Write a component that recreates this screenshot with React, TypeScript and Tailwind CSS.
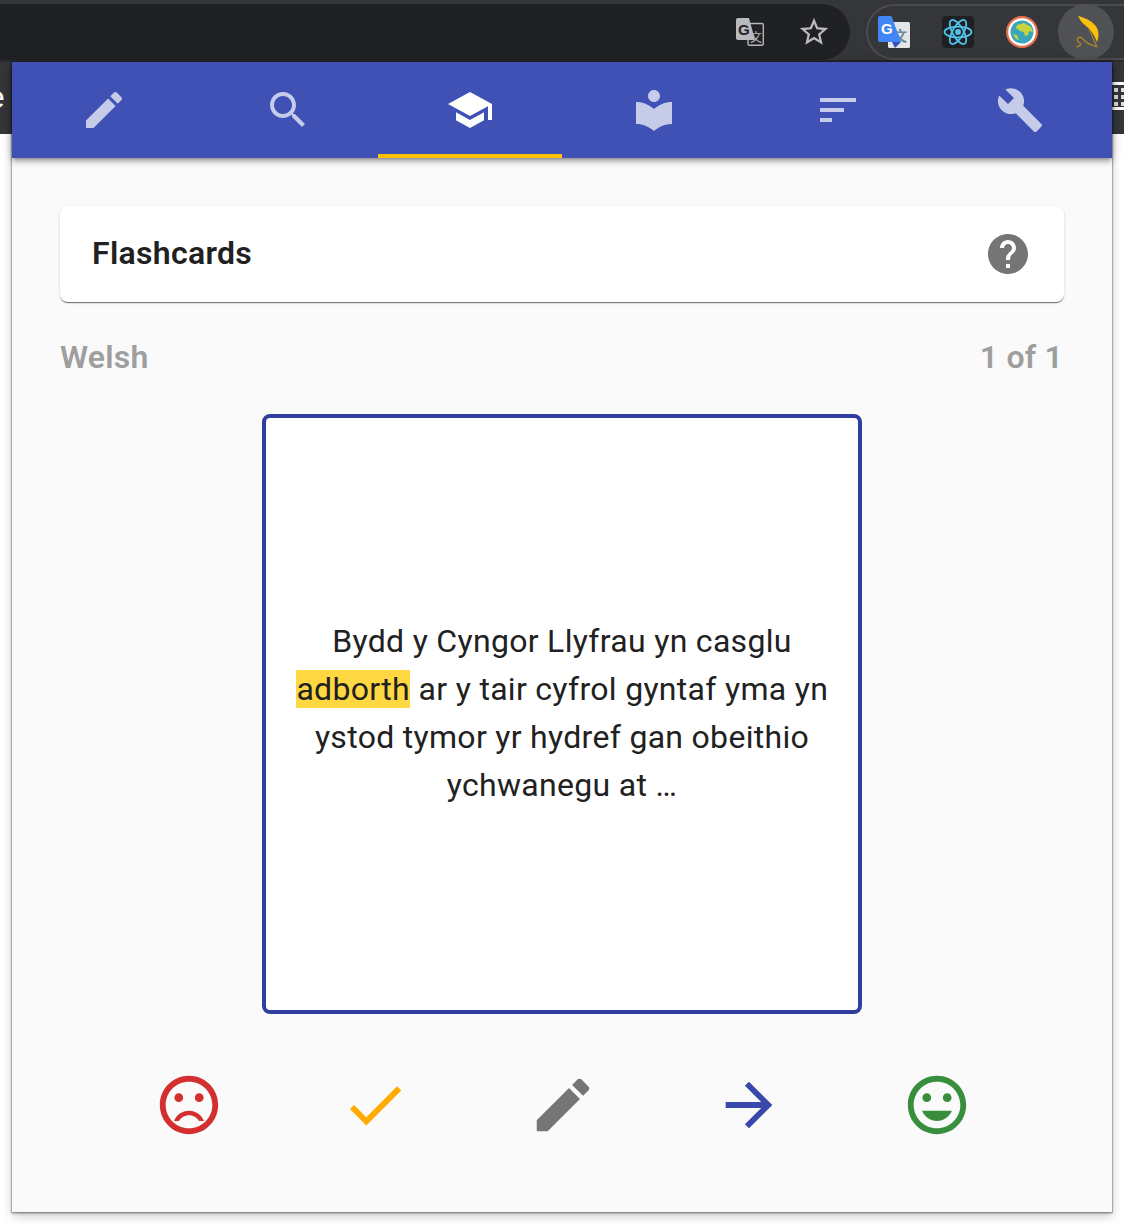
import React from "react";

const P = {
  edit: "M3 17.25V21h3.75L17.81 9.94l-3.75-3.75L3 17.25zM20.71 7.04c.39-.39.39-1.02 0-1.41l-2.34-2.34c-.39-.39-1.02-.39-1.41 0l-1.83 1.83 3.75 3.75 1.83-1.83z",
  search: "M15.5 14h-.79l-.28-.27C15.41 12.59 16 11.11 16 9.5 16 5.91 13.09 3 9.5 3S3 5.91 3 9.5 5.91 16 9.5 16c1.61 0 3.09-.59 4.23-1.57l.27.28v.79l5 4.99L20.49 19l-4.99-5zm-6 0C7.01 14 5 11.99 5 9.5S7.01 5 9.5 5 14 7.01 14 9.5 11.99 14 9.5 14z",
  school: "M5 13.18v4L12 21l7-3.82v-4L12 17l-7-3.82zM12 3L1 9l11 6 9-4.91V17h2V9L12 3z",
  library: "M12 11.55C9.64 9.35 6.48 8 3 8v11c3.48 0 6.64 1.35 9 3.55 2.36-2.19 5.52-3.55 9-3.55V8c-3.48 0-6.64 1.35-9 3.55zM12 8c1.66 0 3-1.34 3-3s-1.34-3-3-3-3 1.34-3 3 1.34 3 3 3z",
  sort: "M3 18h6v-2H3v2zM3 6v2h18V6H3zm0 7h12v-2H3v2z",
  build: "M22.7 19l-9.1-9.1c.9-2.3.4-5-1.5-6.9-2-2-5-2.4-7.4-1.3L9 6 6 9 1.6 4.7C.4 7.1.9 10.1 2.9 12.1c1.9 1.9 4.6 2.4 6.9 1.5l9.1 9.1c.4.4 1 .4 1.4 0l2.3-2.3c.5-.4.5-1.1.1-1.4z",
  help: "M12 2C6.48 2 2 6.48 2 12s4.48 10 10 10 10-4.48 10-10S17.52 2 12 2zm1 17h-2v-2h2v2zm2.07-7.75l-.9.92C13.45 12.9 13 13.5 13 15h-2v-.5c0-1.1.45-2.1 1.17-2.83l1.24-1.26c.37-.36.59-.86.59-1.41 0-1.1-.9-2-2-2s-2 .9-2 2H8c0-2.21 1.79-4 4-4s4 1.79 4 4c0 .88-.36 1.68-.93 2.25z",
  check: "M9 16.17L4.83 12l-1.42 1.41L9 19 21 7l-1.41-1.41z",
  arrow: "M12 4l-1.41 1.41L16.17 11H4v2h12.17l-5.58 5.59L12 20l8-8z",
  sad: "M15.5 8a1.5 1.5 0 1 0 0 3 1.5 1.5 0 0 0 0-3zM8.5 8a1.5 1.5 0 1 0 0 3 1.5 1.5 0 0 0 0-3zM11.99 2C6.47 2 2 6.48 2 12s4.47 10 9.99 10C17.52 22 22 17.52 22 12S17.52 2 11.99 2zM12 20c-4.42 0-8-3.58-8-8s3.58-8 8-8 8 3.58 8 8-3.58 8-8 8zm0-6c-2.33 0-4.32 1.45-5.12 3.5h1.67c.69-1.19 1.97-2 3.45-2s2.75.81 3.45 2h1.67c-.8-2.05-2.79-3.5-5.12-3.5z",
  happy: "M11.99 2C6.47 2 2 6.48 2 12s4.47 10 9.99 10C17.52 22 22 17.52 22 12S17.52 2 11.99 2zM12 20c-4.42 0-8-3.58-8-8s3.58-8 8-8 8 3.58 8 8-3.58 8-8 8zm3.5-9c.83 0 1.5-.67 1.5-1.5S16.33 8 15.5 8 14 8.67 14 9.5s.67 1.5 1.5 1.5zm-7 0c.83 0 1.5-.67 1.5-1.5S9.33 8 8.5 8 7 8.67 7 9.5 7.67 11 8.5 11zm3.5 6.5c2.33 0 4.31-1.46 5.11-3.5H6.89c.8 2.04 2.78 3.5 5.11 3.5z",
};

function Icon({ d, className }: { d: string; className: string }) {
  return (
    <svg viewBox="0 0 24 24" className={className} fill="currentColor" fillRule="evenodd">
      <path d={d} />
    </svg>
  );
}

function Tab({ d, active, nudge }: { d: string; active?: boolean; nudge?: boolean }) {
  return (
    <div className={`relative flex items-center justify-center ${active ? "text-white" : "text-[#c5cbe9]"} ${nudge ? "pl-[2px]" : ""}`}>
      <Icon d={d} className="w-12 h-12" />
      {active && <div className="absolute -left-px right-0 bottom-0 h-1 bg-[#ffc107]" />}
    </div>
  );
}

function TranslateMono() {
  return (
    <svg viewBox="0 0 28 28" className="w-7 h-7">
      <rect x="12" y="5.5" width="15.3" height="21.8" rx="1.5" fill="#202124" stroke="#b5b6b8" strokeWidth="1.4" />
      <path d="M0 2A2 2 0 0 1 2 0h11l6 22H2a2 2 0 0 1-2-2z" fill="#b9babc" />
      <text x="2" y="16.5" fontFamily="Liberation Sans, sans-serif" fontWeight="700" fontSize="15" fill="#202124">G</text>
      <text x="14" y="24" fontFamily="Noto Sans CJK SC, sans-serif" fontSize="12" fill="#b5b6b8">文</text>
    </svg>
  );
}

function GoogleTranslate() {
  return (
    <svg viewBox="0 0 32 32" className="w-8 h-8">
      <rect x="10" y="6" width="22" height="26" rx="1.5" fill="#e4e5e6" />
      <text x="15" y="25" fontFamily="Noto Sans CJK SC, sans-serif" fontSize="14" fontWeight="700" fill="#6b8a96">文</text>
      <path d="M0 2A2 2 0 0 1 2 0h11.5L23 26H2a2 2 0 0 1-2-2z" fill="#4285f4" />
      <path d="M14 26h9l-6 6z" fill="#3a50b4" />
      <text x="3" y="18" fontFamily="Liberation Sans, sans-serif" fontWeight="700" fontSize="15" fill="#fff">G</text>
    </svg>
  );
}

function ReactLogo() {
  return (
    <div className="w-8 h-8 rounded bg-[#1f2023] flex items-center justify-center">
      <svg viewBox="0 0 32 32" className="w-8 h-8" fill="none" stroke="#4fc3e8" strokeWidth="1.8">
        <ellipse cx="16" cy="16" rx="13.5" ry="5.4" />
        <ellipse cx="16" cy="16" rx="13.5" ry="5.4" transform="rotate(60 16 16)" />
        <ellipse cx="16" cy="16" rx="13.5" ry="5.4" transform="rotate(120 16 16)" />
        <circle cx="16" cy="16" r="3" fill="#4fc3e8" stroke="none" />
      </svg>
    </div>
  );
}

function Earth() {
  return (
    <svg viewBox="0 0 32 32" className="w-8 h-8">
      <circle cx="16" cy="16" r="16" fill="#e8704f" />
      <circle cx="16" cy="16" r="13.8" fill="#fff" />
      <circle cx="16" cy="16" r="11.5" fill="#3aa6b9" />
      <path d="M11 9l7-2 7 4 2 5-4-1-1 4-3 1-1-4-4-1-4-3z" fill="#c9d53c" />
      <path d="M7 18l4 1 2 5-3-1z" fill="#c9d53c" />
    </svg>
  );
}

function Feather() {
  return (
    <div className="w-14 h-14 rounded-full bg-[#505154]">
      <svg viewBox="0 0 56 56" className="w-14 h-14" fill="none">
        <path d="M20 12C28 14 36 18 39 24C41 28 41 33 39 38C36 30 32 25 28 22C24 19 22 16 20 12z" fill="#f9c00c" />
        <path d="M39 43C34 41 30 40 27 37C24 34 22 32 20 34C18 36 20 38 22 39C24 41 21 42 18 43" stroke="#a98a2a" strokeWidth="1.3" />
        <path d="M31 25L39 43" stroke="#a98a2a" strokeWidth="1.2" />
      </svg>
    </div>
  );
}

export default function App() {
  return (
    <div className="relative w-[1124px] h-[1230px] bg-white overflow-hidden font-['Roboto',sans-serif]">
      <div className="h-[62px] bg-[#35363a] pt-1 flex border-b-2 border-[#2b2c2f]">
        <div className="w-[850px] h-14 bg-[#202124] rounded-r-[28px] flex items-center justify-end pr-[19px] gap-[33px]">
          <TranslateMono />
          <svg viewBox="0 0 24 24" className="w-[34px] h-[34px]" fill="#b9babc">
            <path d="M22 9.24l-7.19-.62L12 2 9.19 8.63 2 9.24l5.46 4.73L5.82 21 12 17.27 18.18 21l-1.63-7.03L22 9.24zM12 15.4l-3.76 2.27 1-4.28-3.32-2.88 4.38-.38L12 6.1l1.71 4.04 4.38.38-3.32 2.88 1 4.28L12 15.4z" />
          </svg>
        </div>
        <div className="ml-4 flex-1 h-14 rounded-l-[28px] border-2 border-r-0 border-[#4b4c50] flex items-center pl-[10px] gap-8">
          <GoogleTranslate />
          <ReactLogo />
          <Earth />
          <div className="ml-[-12px]">
            <Feather />
          </div>
        </div>
      </div>
      <div className="h-[72px] bg-[#35363a] flex justify-between text-white">
        <div className="text-[32px] leading-[70px] ml-[-13px] font-['Liberation_Sans',sans-serif]">e</div>
        <div className="w-3 flex flex-col pt-5">
          <div className="h-[3px] bg-white" />
          <div className="grid grid-cols-[4px_4px] gap-x-[3px] gap-y-[3px] pt-[3px] pl-[2px] h-[22px] content-start">
            <div className="h-[4px] bg-[#ddd]" />
            <div className="h-[4px] bg-[#ddd]" />
            <div className="h-[4px] bg-[#ddd]" />
            <div className="h-[4px] bg-[#ddd]" />
            <div className="h-[4px] bg-[#ddd]" />
            <div className="h-[4px] bg-[#ddd]" />
          </div>
          <div className="h-[3px] bg-white" />
        </div>
      </div>

      <div className="absolute left-3 top-[62px] w-[1100px] h-[1150px] bg-[#fafafa] shadow-[0_0_1px_1px_rgba(0,0,0,0.22),0_2px_2px_rgba(0,0,0,0.2),0_4px_10px_rgba(0,0,0,0.2)]">
        <div className="h-24 bg-[#3f51b5] grid grid-cols-6 shadow-[0_2px_4px_-1px_rgba(0,0,0,0.3),0_4px_6px_rgba(0,0,0,0.2),0_1px_10px_rgba(0,0,0,0.12)]">
          <Tab d={P.edit} />
          <Tab d={P.search} nudge />
          <Tab d={P.school} active />
          <Tab d={P.library} />
          <Tab d={P.sort} nudge />
          <Tab d={P.build} />
        </div>

        <div className="px-12 pt-12">
          <div className="h-24 bg-white rounded-lg shadow-[0_2px_1px_-1px_rgba(0,0,0,0.4),0_1px_1px_rgba(0,0,0,0.2),0_1px_3px_rgba(0,0,0,0.12)] flex items-center justify-between px-8">
            <div className="pb-[2px] text-[32px] font-semibold tracking-[0.3px] text-[#212121]">Flashcards</div>
            <Icon d={P.help} className="w-12 h-12 text-[#757575]" />
          </div>

          <div className="mt-6 h-[64px] pb-[2px] flex items-center justify-between pr-[1px] text-[32px] font-semibold tracking-[0.2px] text-[#9e9e9e]">
            <div>Welsh</div>
            <div>1 of 1</div>
          </div>

          <div className="mt-6 mx-auto w-[600px] h-[600px] pb-[2px] bg-white border-4 border-[#303f9f] rounded-lg flex items-center justify-center px-7 text-center text-[32px] leading-[48px] tracking-[0.3px] text-[#212121]">
            <p>
              Bydd y Cyngor Llyfrau yn casglu <span className="bg-[#ffd740] px-[0.5px]">adborth</span> ar y tair cyfrol gyntaf yma yn ystod tymor yr hydref gan obeithio ychwanegu at …
            </p>
          </div>
        </div>

        <div className="mt-14 ml-[142px] grid grid-cols-[186px_188px_186px_188px_70px]">
          <Icon d={P.sad} className="w-[70px] h-[70px] text-[#d32f2f]" />
          <Icon d={P.check} className="w-[70px] h-[70px] text-[#ffab00]" />
          <Icon d={P.edit} className="w-[70px] h-[70px] text-[#757575]" />
          <Icon d={P.arrow} className="w-[70px] h-[70px] text-[#3949ab]" />
          <Icon d={P.happy} className="w-[70px] h-[70px] text-[#388e3c]" />
        </div>
      </div>
    </div>
  );
}
